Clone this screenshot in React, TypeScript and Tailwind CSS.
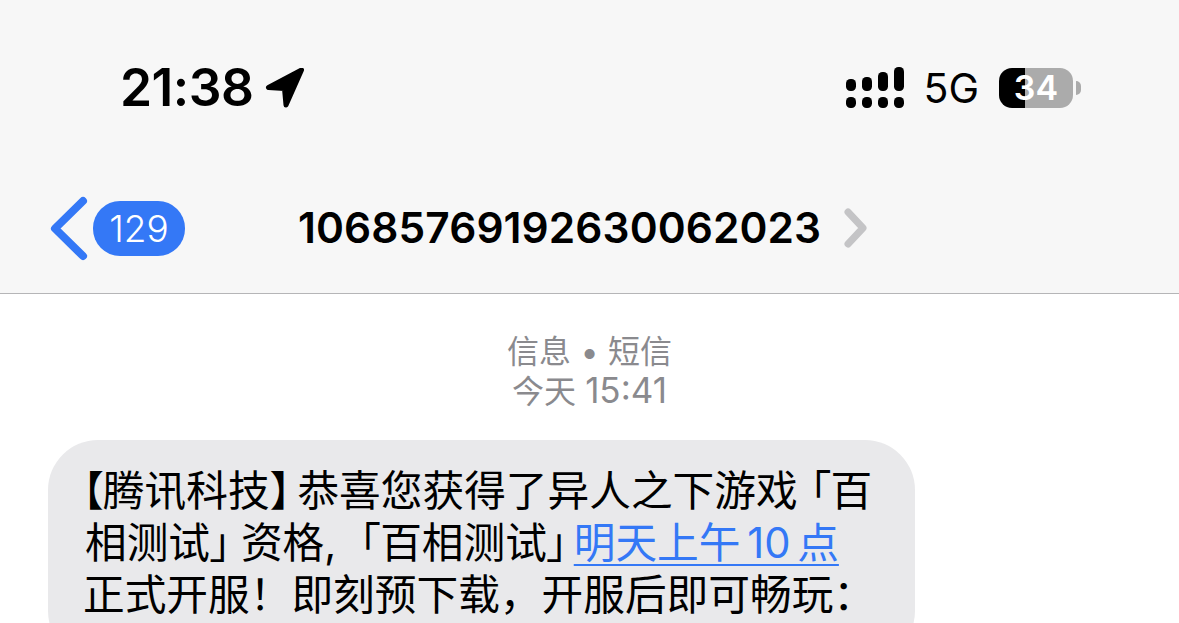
import React from "react";

const cjk = '"Inter","Noto Sans CJK SC",sans-serif';

function Location() {
  return (
    <svg width="40" height="40" viewBox="0 0 40 40" className="ml-[11px] shrink-0">
      <path d="M36.5 4 L3.5 21.5 L19.5 22.5 L21 39 Z" fill="#000" stroke="#000" strokeWidth="5" strokeLinejoin="round" transform="translate(0 -2)" />
    </svg>
  );
}

function Signal() {
  return (
    <svg width="60" height="42" viewBox="0 0 60 42" className="shrink-0">
      <g fill="#000">
        <rect x="0" y="12" width="10" height="12" rx="4.5" />
        <rect x="16" y="10" width="10" height="14" rx="4.5" />
        <rect x="32" y="5" width="10" height="19" rx="4.5" />
        <rect x="48" y="0" width="10" height="24" rx="4.5" />
        <rect x="0" y="30" width="10" height="11" rx="4.5" />
        <rect x="16" y="30" width="10" height="11" rx="4.5" />
        <rect x="32" y="30" width="10" height="11" rx="4.5" />
        <rect x="48" y="30" width="10" height="11" rx="4.5" />
      </g>
    </svg>
  );
}

export default function App() {
  return (
    <div className="h-[623px] w-[1179px] overflow-hidden bg-white text-black" style={{ fontFamily: cjk }}>
      <header className="h-[294px] border-b border-[#b5b5b7] bg-[#f7f7f7]">
        <div className="flex h-[195px] items-start justify-between pl-[120px] pr-[98px] pt-[67px]">
          <div className="flex h-[42px] items-center">
            <span className="text-[51.5px] font-semibold leading-none tracking-[-0.5px]">21:38</span>
            <Location />
          </div>
          <div className="flex h-[42px] items-center">
            <Signal />
            <span className="ml-[17px] text-[41px] font-normal leading-none">5G</span>
            <div className="ml-[20px] flex h-[40px] w-[74px] items-center justify-center rounded-[13px] bg-[linear-gradient(90deg,#000_35%,#ababab_35%)] text-[34px] font-semibold leading-none text-white">
              34
            </div>
            <div className="ml-[3px] h-[14px] w-[5px] rounded-r-full bg-[#ababab]" />
          </div>
        </div>
        <div className="flex h-[66px] items-center pl-[48px]">
          <svg width="42" height="66" viewBox="0 0 42 66" className="shrink-0">
            <path d="M35 6 L7 33.5 L35 61" fill="none" stroke="#3478f6" strokeWidth="8" strokeLinecap="round" strokeLinejoin="round" />
          </svg>
          <div className="ml-[3px] flex h-[55px] w-[92px] items-center justify-center rounded-[27px] bg-[#3478f6] text-[37px] font-light leading-none text-white">
            129
          </div>
          <div className="ml-[113px] text-[42.4px] font-semibold leading-none tracking-[0.1px]">10685769192630062023</div>
          <svg width="26" height="40" viewBox="0 0 26 40" className="ml-[22px] shrink-0">
            <path d="M5 4 L20 20 L5 36" fill="none" stroke="#c4c4c6" strokeWidth="7" strokeLinecap="round" strokeLinejoin="round" />
          </svg>
        </div>
      </header>
      <div className="flex flex-col items-center pt-[38px] text-[32px] leading-[39px] text-[#8a8a8e]">
        <div className="[word-spacing:2px]">信息 <span className="font-bold">•</span> 短信</div>
        <div>今天 <span className="text-[35px]">15:41</span></div>
      </div>
      <div className="ml-[48px] mt-[29px] w-[867px] rounded-[50px] bg-[#e9e9eb] px-[37px] pb-[40px] pt-[25px] text-[41.7px] leading-[52px] whitespace-nowrap">
        <div>
          <span className="ml-[-3px] [font-feature-settings:'palt']">【</span>腾讯科技
          <span className="ml-[1px] mr-[6px] [font-feature-settings:'palt']">】</span>恭喜您获得了异人之下游戏
          <span className="ml-[12px] [font-feature-settings:'palt']">「</span>百
        </div>
        <div>
          相测试<span className="mr-[10px] [font-feature-settings:'palt']">」</span>资格,
          <span className="ml-[23px] [font-feature-settings:'palt']">「</span>百相测试
          <span className="[font-feature-settings:'palt']">」</span>
          <span className="ml-[6px] text-[#3478f6] underline decoration-2 underline-offset-[6px] [word-spacing:-5px]">明天上午 10 点</span>
        </div>
        <div className="ml-[-2px]">正式开服！即刻预下载，开服后即可畅玩：</div>
      </div>
    </div>
  );
}
